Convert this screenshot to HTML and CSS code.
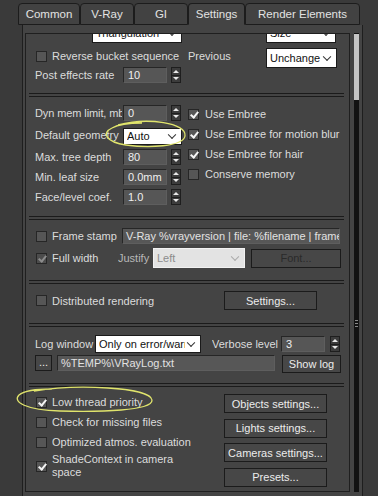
FILE: index.html
```html
<!DOCTYPE html>
<html lang="en">
<head>
    <meta charset="UTF-8">
    <meta name="viewport" content="width=device-width, initial-scale=1.0">
    <title>Render Setup - Settings</title>
    <link rel="stylesheet" href="styles.css">
</head>
<body>

    <!-- tabs -->
    <div class="tabs">
        <div class="tab t-common">Common</div>
        <div class="tab t-vray">V-Ray</div>
        <div class="tab t-gi">GI</div>
        <div class="tab t-set active">Settings</div>
        <div class="tab t-re">Render Elements</div>
    </div>

    <div class="main">
        <div class="view">
            <div class="roll">

                <!-- bucket / post effects (scrolled, top cut off) -->
                <div class="sec s1">
                    <div class="cut">
                        <div class="sel tri"><span>Triangulation</span></div>
                        <div class="sel size"><span>Size</span></div>
                    </div>
                    <div class="row r-rev">
                        <div class="chk w-rev"><span class="cb"></span>Reverse bucket sequence</div>
                        <div class="lab w-prev">Previous</div>
                        <div class="sel w-unch"><span>Unchange</span></div>
                    </div>
                    <div class="row r-post">
                        <div class="lab w-88">Post effects rate</div>
                        <div class="num">10</div>
                        <div class="spin"><i class="up"></i><i class="dn"></i></div>
                    </div>
                </div>
                <div class="sep"></div>

                <!-- dynamic memory / embree -->
                <div class="sec s2">
                    <div class="col-l">
                        <div class="row">
                            <div class="lab w-86">Dyn mem limit, mb</div>
                            <div class="num">0</div>
                            <div class="spin"><i class="up"></i><i class="dn"></i></div>
                        </div>
                        <div class="row tall">
                            <div class="lab w-88">Default geometry</div>
                            <div class="sel w-auto"><span>Auto</span></div>
                        </div>
                        <div class="row">
                            <div class="lab w-88">Max. tree depth</div>
                            <div class="num">80</div>
                            <div class="spin"><i class="up"></i><i class="dn"></i></div>
                        </div>
                        <div class="row">
                            <div class="lab w-88">Min. leaf size</div>
                            <div class="num">0.0mm</div>
                            <div class="spin"><i class="up"></i><i class="dn"></i></div>
                        </div>
                        <div class="row">
                            <div class="lab w-88">Face/level coef.</div>
                            <div class="num">1.0</div>
                            <div class="spin"><i class="up"></i><i class="dn"></i></div>
                        </div>
                    </div>
                    <div class="col-r">
                        <div class="row"><div class="chk"><span class="cb on"></span>Use Embree</div></div>
                        <div class="row"><div class="chk"><span class="cb on"></span>Use Embree for motion blur</div></div>
                        <div class="row"><div class="chk"><span class="cb on"></span>Use Embree for hair</div></div>
                        <div class="row"><div class="chk"><span class="cb"></span>Conserve memory</div></div>
                    </div>
                </div>
                <div class="sep"></div>

                <!-- frame stamp -->
                <div class="sec s3">
                    <div class="row r16">
                        <div class="chk w-87"><span class="cb"></span>Frame stamp</div>
                        <div class="field w-stamp">V-Ray %vrayversion | file: %filename | frame: %frame | primitives: %primitives</div>
                    </div>
                    <div class="row r-full">
                        <div class="chk w-83"><span class="cb on dim"></span>Full width</div>
                        <div class="lab w-35 dimtext">Justify</div>
                        <div class="sel off w-left"><span>Left</span></div>
                        <div class="btn off w-font">Font...</div>
                    </div>
                </div>
                <div class="sep"></div>

                <!-- distributed rendering -->
                <div class="sec s4">
                    <div class="row r19">
                        <div class="chk w-189"><span class="cb"></span>Distributed rendering</div>
                        <div class="btn w-dr">Settings...</div>
                    </div>
                </div>
                <div class="sep"></div>

                <!-- log window -->
                <div class="sec s5">
                    <div class="row r18">
                        <div class="lab w-60">Log window</div>
                        <div class="sel w-log"><span>Only on error/warnings</span></div>
                        <div class="lab w-verb">Verbose level</div>
                        <div class="num">3</div>
                        <div class="spin sp5"><i class="up"></i><i class="dn"></i></div>
                    </div>
                    <div class="row r-log2">
                        <div class="btn w-dots">...</div>
                        <div class="field w-path">%TEMP%\VRayLog.txt</div>
                        <div class="btn w-show">Show log</div>
                    </div>
                </div>
                <div class="sep"></div>

                <!-- misc -->
                <div class="sec s6">
                    <div class="col-l6">
                        <div class="row"><div class="chk"><span class="cb on"></span>Low thread priority</div></div>
                        <div class="row"><div class="chk"><span class="cb"></span>Check for missing files</div></div>
                        <div class="row"><div class="chk"><span class="cb"></span>Optimized atmos. evaluation</div></div>
                        <div class="row two"><div class="chk"><span class="cb on"></span><span>ShadeContext in camera<br>space</span></div></div>
                    </div>
                    <div class="col-r6">
                        <div class="btn">Objects settings...</div>
                        <div class="btn">Lights settings...</div>
                        <div class="btn">Cameras settings...</div>
                        <div class="btn">Presets...</div>
                    </div>
                </div>

            </div>
        </div>

        <!-- scrollbar -->
        <div class="scroll">
            <div class="track">
                <div class="thumb"></div>
                <div class="grip"><i></i><i></i><i></i></div>
            </div>
        </div>
    </div>

    <!-- hand drawn yellow marks -->
    <svg class="marks" width="378" height="496" viewBox="0 0 378 496">
        <path d="M118 125 C148 117 187 123 185 136 C183 147 148 148 126 145 C106 142 101 133 112 128 C119 124 130 123 142 123"/>
        <path d="M34 391 C76 384 150 387 152 400 C153 411 100 412 60 411 C26 410 12 402 19 395 C25 390 36 389 52 389"/>
    </svg>

</body>
</html>
```

FILE: styles.css
```css
/* dark 3ds max style */
* {
    box-sizing: border-box;
}
body {
    margin: 0;
    width: 378px;
    height: 496px;
    overflow: hidden;
    position: relative;
    background-color: #3a3a3a;
    font-family: "Liberation Sans", Arial, sans-serif;
    font-size: 11px;
    color: #dcdcdc;
}

/* tabs */
.tabs {
    display: flex;
    height: 25px;
    padding: 3px 0 0 18px;
}
.tab {
    height: 22px;
    border: 1px solid #1c1c1c;
    border-radius: 4px 4px 0 0;
    background-color: #424242;
    display: flex;
    align-items: center;
    justify-content: center;
    font-size: 11.5px;
    color: #e2e2e2;
}
.tab.active {
    background-color: #444;
    border-bottom-color: #444;
}
.t-common { width: 62px; }
.t-vray { width: 54px; }
.t-gi { width: 54px; }
.t-set { width: 57px; }
.t-re { width: 115px; }

/* main panel */
.main {
    display: flex;
    width: 341px;
    height: 471px;
    margin-left: 22px;
    padding: 8px 0 0 2px;
    background-color: #444;
    border-left: 1px solid #1e1e1e;
    border-right: 1px solid #1e1e1e;
}
.view {
    width: 326px;
    height: 459px;
    border: 1px solid #1f1f1f;
    overflow: hidden;
}
.roll {
    margin-left: 3px;
    width: 315px;
}
.sec {
    padding-left: 6px;
}
.sep {
    height: 4px;
    border-top: 4px double #1b1b1b;
}

/* rows and labels */
.row {
    display: flex;
    align-items: center;
    height: 20px;
}
.lab {
    white-space: nowrap;
    overflow: hidden;
    flex: none;
}
.chk {
    display: flex;
    align-items: center;
    white-space: nowrap;
    flex: none;
}
.dimtext { color: #b8b8b8; }

.w-86 { width: 87px; margin-right: 1px; letter-spacing: -0.1px; }
.w-88 { width: 88px; }
.w-87 { width: 87px; }
.w-83 { width: 83px; }
.w-35 { width: 35px; }
.w-60 { width: 60px; }
.w-189 { width: 189px; }

/* checkbox */
.cb {
    position: relative;
    width: 11px;
    height: 11px;
    margin: 0 5px 0 1px;
    background-color: #565656;
    border: 1px solid #262626;
    flex: none;
}
.cb.on::after {
    content: "";
    position: absolute;
    left: 3px;
    top: 0;
    width: 3px;
    height: 6px;
    border: solid #f4f4f4;
    border-width: 0 2px 2px 0;
    transform: rotate(40deg);
}
.cb.dim {
    background-color: #4c4c4c;
}
.cb.dim::after {
    border-color: #8c8c8c;
}

/* number field + spinner */
.num {
    width: 44px;
    height: 16px;
    padding-left: 4px;
    display: flex;
    align-items: center;
    background-color: #565656;
    border: 1px solid;
    border-color: #262626 #5e5e5e #5e5e5e #262626;
    color: #efefef;
    flex: none;
}
.spin {
    width: 10px;
    height: 16px;
    margin-left: 4px;
    display: flex;
    flex-direction: column;
    background-color: #3c3c3c;
    border: 1px solid #1e1e1e;
    flex: none;
}
.spin.sp5 { margin-left: 5px; }
.spin i {
    flex: 1;
    display: flex;
    align-items: center;
    justify-content: center;
}
.spin .up { border-bottom: 1px solid #1e1e1e; }
.spin .up::before {
    content: "";
    border-left: 3px solid transparent;
    border-right: 3px solid transparent;
    border-bottom: 3px solid #e8e8e8;
}
.spin .dn::before {
    content: "";
    border-left: 3px solid transparent;
    border-right: 3px solid transparent;
    border-top: 3px solid #e8e8e8;
}

/* dropdown */
.sel {
    position: relative;
    height: 20px;
    padding: 0 15px 0 3px;
    display: flex;
    align-items: center;
    background-color: #fff;
    border: 1px solid #1a1a1a;
    color: #111;
    white-space: nowrap;
    flex: none;
}
.sel span {
    flex: 1;
    overflow: hidden;
}
.sel::after {
    content: "";
    position: absolute;
    right: 6px;
    top: 50%;
    width: 5px;
    height: 5px;
    border-right: 1px solid #333;
    border-bottom: 1px solid #333;
    transform: translateY(-70%) rotate(45deg);
}
.sel.off {
    background-color: #e3e3e3;
    border-color: #f2f2f2;
    color: #8c8c8c;
}
.sel.off::after {
    border-color: #aaa;
}

/* text field */
.field {
    height: 16px;
    padding-left: 3px;
    display: flex;
    align-items: center;
    overflow: hidden;
    white-space: nowrap;
    background-color: #575757;
    border: 1px solid;
    border-color: #262626 #5e5e5e #5e5e5e #262626;
    color: #e2e2e2;
    flex: none;
}

/* button */
.btn {
    height: 19px;
    display: flex;
    align-items: center;
    justify-content: center;
    background-color: #474747;
    border: 1px solid #1b1b1b;
    color: #ececec;
    white-space: nowrap;
    flex: none;
}
.btn.off {
    color: #2a2a2a;
}

/* section 1 */
.s1 {
    padding-bottom: 10px;
}
.cut {
    display: flex;
    align-items: flex-end;
    height: 9px;
    overflow: hidden;
}
.cut .tri { width: 90px; margin-left: 57px; }
.cut .size { width: 70px; margin-left: 84px; }
.r-rev {
    margin-top: 5px;
    align-items: flex-start;
}
.w-rev { width: 153px; height: 14px; margin-top: 1px; }
.w-prev { width: 78px; line-height: 14px; margin-top: 1px; }
.w-unch { width: 71px; padding-right: 13px; }
.r-post {
    height: 16px;
    margin-top: -1px;
}

/* section 2 */
.s2 {
    display: flex;
    padding-top: 6px;
    padding-bottom: 9px;
}
.col-l { width: 153px; }
.col-r { margin-top: 1px; }
.col-r .cb { margin: 0 6px 0 0; }
.row.tall { height: 24px; }
.w-auto { width: 59px; height: 17px; margin-top: 2px; }

/* section 3 */
.s3 {
    padding-top: 8px;
    padding-bottom: 12px;
}
.r16 { height: 16px; }
.w-stamp { width: 218px; }
.r-full { margin-top: 4px; }
.w-left { width: 92px; }
.w-font { width: 90px; margin-left: 6px; }

/* section 4 */
.s4 {
    padding-top: 7px;
    padding-bottom: 13px;
}
.r19 { height: 19px; }
.w-dr { width: 93px; }

/* section 5 */
.s5 {
    padding-top: 8px;
    padding-bottom: 10px;
}
.r18 { height: 18px; }
.w-log { width: 106px; height: 18px; }
.w-verb { width: 69px; margin-left: 11px; }
.r-log2 {
    height: 18px;
    margin-top: 2px;
    align-items: flex-start;
}
.w-dots { width: 17px; height: 16px; padding-bottom: 3px; }
.w-path { width: 218px; margin-left: 5px; }
.w-show { width: 59px; height: 18px; margin-left: 7px; }

/* section 6 */
.s6 {
    display: flex;
    padding-top: 5px;
}
.col-l6 { width: 189px; }
.row.two {
    height: 26px;
    margin-top: 1px;
    line-height: 13px;
}
.col-r6 {
    display: flex;
    flex-direction: column;
    gap: 5.5px;
    margin-top: 2px;
}
.col-r6 .btn { width: 103px; }

/* scrollbar */
.scroll {
    width: 12px;
}
.track {
    width: 5px;
    height: 459px;
    margin-left: 4px;
    padding-top: 1px;
    background-color: #121212;
}
.thumb {
    height: 66px;
    background-color: #c6c6c6;
}
.grip {
    margin-top: 220px;
    display: flex;
    flex-direction: column;
    gap: 2px;
    padding: 0 1px;
}
.grip i {
    height: 1px;
    background-color: #8a8a8a;
}

/* yellow annotations */
.marks {
    position: absolute;
    left: 0;
    top: 0;
    pointer-events: none;
}
.marks path {
    fill: none;
    stroke: #e0e46c;
    stroke-width: 1.3;
}
```
